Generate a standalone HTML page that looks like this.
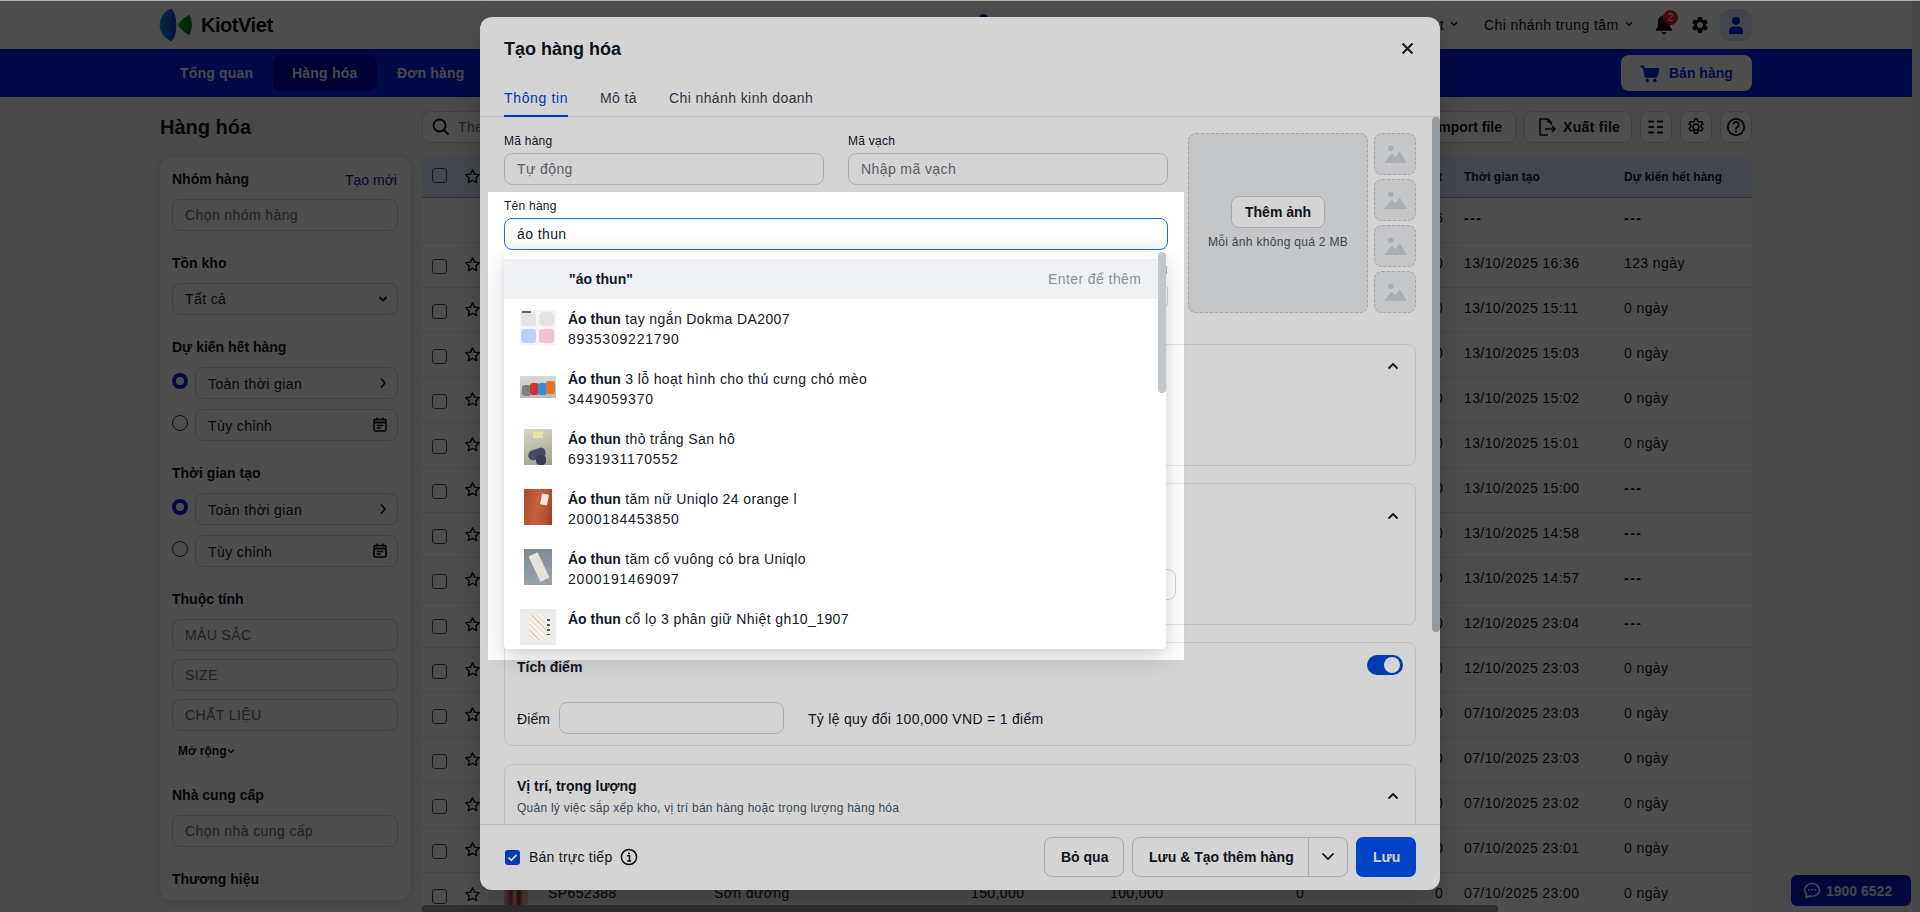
<!DOCTYPE html>
<html><head><meta charset="utf-8">
<style>
*{box-sizing:border-box;margin:0;padding:0}
html,body{width:1920px;height:912px;overflow:hidden}
body{font-family:"Liberation Sans",sans-serif;color:#111827;background:#f0f2f5;position:relative;font-size:14px}
.a{position:absolute;white-space:nowrap}
.r{letter-spacing:.4px}
.b{font-weight:700}
/* page */
#hdr{left:0;top:0;width:1920px;height:49px;background:#fff}
#nav{left:0;top:49px;width:1912px;height:48px;background:#0a22e6}
.navi{top:65px;line-height:16px;color:#e8ecff;font-size:14px;font-weight:700;letter-spacing:.2px}
.card{background:#fff;border-radius:12px;box-shadow:0 2px 14px rgba(0,0,0,.09)}
.inp{border:1px solid #d1d5db;border-radius:8px;background:#fff}
.ph{color:#6b7280}
.lbl{font-size:14px;font-weight:700;color:#111827}
.btn{border:1px solid #d1d5db;border-radius:8px;background:#fff}
.chk{width:16px;height:16px;border:1.5px solid #4b5563;border-radius:3px}
/* overlay */
#backdrop{left:0;top:0;width:1920px;height:912px;background:rgba(0,0,0,.63)}
#modal{left:480px;top:17px;width:960px;height:873px;background:#fff;border-radius:12px;overflow:hidden}
#spot{left:488px;top:192px;width:696px;height:468px;box-shadow:0 0 2px 4000px rgba(0,0,0,.17)}
#topline{left:0;top:0;width:1920px;height:1px;background:#acadac}

.th{top:169px;line-height:16px;font-size:12px;color:#111827}
.td{line-height:16px}
.hl{left:422px;width:1330px;height:1px;background:#e5e7eb}
.m{color:#111827}
.lb{font-size:12px;line-height:14px;letter-spacing:.25px;color:#111827}
.mi{border:1px solid #d1d5db;border-radius:8px;background:#fff}
.sec{border:1px solid #e5e7eb;border-radius:8px;background:#fff}
.dbox{border:1px dashed #c3c7ce;border-radius:8px;background:#eceef1}
.t14{font-size:14px;line-height:16px}
.dig{letter-spacing:.8px}
.obtn{border:1px solid #c9cdd4;border-radius:8px;background:#fff}

.dash{letter-spacing:1.5px;font-weight:700}

</style></head><body>
<svg width="0" height="0" style="position:absolute">
<symbol id="star" viewBox="0 0 24 24"><path d="M12 2.5l2.9 6.1 6.6.8-4.9 4.6 1.3 6.6L12 17.3l-5.9 3.3 1.3-6.6-4.9-4.6 6.6-.8z" fill="none" stroke="#111" stroke-width="2" stroke-linejoin="round"/></symbol>
<symbol id="imgic" viewBox="0 0 24 20"><circle cx="7.5" cy="5" r="2.6" fill="#cdd1d8"/><path d="M1 19 L8.5 10 L12 13.5 L16 8 L23 19 Z" fill="#cdd1d8"/></symbol>
<symbol id="chevup" viewBox="0 0 12 8"><path d="M1.5 6.5 L6 2 L10.5 6.5" stroke="#111" stroke-width="1.8" fill="none"/></symbol>
</svg>
<!-- PAGE -->
<div class="a" id="hdr"></div>
<div class="a" style="left:1912px;top:0;width:8px;height:912px;background:#e9e9ea"></div>
<div class="a" style="left:979px;top:14px;width:9px;height:9px;border-radius:50%;background:#0a2bd8"></div>
<svg class="a" style="left:159px;top:8px" width="36" height="34" viewBox="0 0 36 34" overflow="visible">
 <defs><linearGradient id="lg1" x1="0" x2="1" y1="0" y2="0"><stop offset="0" stop-color="#1c8fd0"/><stop offset="1" stop-color="#0a3fd4"/></linearGradient>
 <linearGradient id="lg2" x1="0" x2="1"><stop offset="0" stop-color="#19a329"/><stop offset="1" stop-color="#0a7a16"/></linearGradient></defs>
 <path d="M12.5 1.3 C 5 3, 1.2 10, 1.2 17 C 1.2 24, 5 30, 12.5 32.7 C 18.2 27, 18.2 7, 12.5 1.3 Z" fill="url(#lg1)" stroke="url(#lg1)" stroke-width="1" stroke-linejoin="round"/>
 <path d="M30 7.6 C 25.5 10, 22 13, 19.5 17 C 22 21, 25.5 24, 30 26.4 C 33 22, 33 12, 30 7.6 Z" fill="url(#lg2)" stroke="url(#lg2)" stroke-width="1.2" stroke-linejoin="round"/>
</svg>
<div class="a b" style="left:201px;top:14px;font-size:20px;color:#111;letter-spacing:-.45px">KiotViet</div>
<div class="a r" style="right:476px;top:17px;font-size:14px;color:#1f2937">Hỗ trợ t</div>
<svg class="a" style="left:1450px;top:21px" width="8" height="6" viewBox="0 0 8 6"><path d="M1 1.2 L4 4.2 L7 1.2" stroke="#1f2937" stroke-width="1.6" fill="none"/></svg>
<div class="a r" style="left:1484px;top:17px;font-size:14px;color:#111827">Chi nhánh trung tâm</div>
<svg class="a" style="left:1625px;top:21px" width="8" height="6" viewBox="0 0 8 6"><path d="M1 1.2 L4 4.2 L7 1.2" stroke="#1f2937" stroke-width="1.6" fill="none"/></svg>
<!-- bell -->
<svg class="a" style="left:1655px;top:14px" width="18" height="22" viewBox="0 0 18 22"><path d="M9 1.5c-3.6 0-6 2.8-6 6.3v4.6L1 15.5v1.2h16v-1.2l-2-3.1V7.8C15 4.3 12.6 1.5 9 1.5z M6.6 18h4.8a2.4 2.4 0 0 1-4.8 0z" fill="#111"/></svg>
<div class="a" style="left:1663px;top:10px;width:15px;height:15px;border-radius:8px;background:#dc2626;color:#fff;font-size:10px;text-align:center;line-height:15px">2</div>
<!-- gear -->
<svg class="a" style="left:1690px;top:15px" width="20" height="20" viewBox="0 0 24 24"><path fill="#111" d="M19.14 12.94c.04-.3.06-.61.06-.94 0-.32-.02-.64-.07-.94l2.03-1.58a.49.49 0 0 0 .12-.61l-1.92-3.32a.488.488 0 0 0-.59-.22l-2.39.96c-.5-.38-1.03-.7-1.62-.94l-.36-2.54a.484.484 0 0 0-.48-.41h-3.84c-.24 0-.43.17-.47.41l-.36 2.54c-.59.24-1.13.57-1.62.94l-2.39-.96c-.22-.08-.47 0-.59.22L2.74 8.87c-.12.21-.08.47.12.61l2.03 1.58c-.05.3-.09.63-.09.94s.02.64.07.94l-2.03 1.58a.49.49 0 0 0-.12.61l1.92 3.32c.12.22.37.29.59.22l2.39-.96c.5.38 1.03.7 1.62.94l.36 2.54c.05.24.24.41.48.41h3.84c.24 0 .44-.17.47-.41l.36-2.54c.59-.24 1.13-.56 1.62-.94l2.39.96c.22.08.47 0 .59-.22l1.92-3.32c.12-.22.07-.47-.12-.61l-2.01-1.58zM12 15.6c-1.98 0-3.6-1.62-3.6-3.6s1.62-3.6 3.6-3.6 3.6 1.62 3.6 3.6-1.62 3.6-3.6 3.6z"/></svg>
<div class="a" style="left:1720px;top:9px;width:32px;height:32px;border-radius:9px;background:#dbe5f8"></div>
<svg class="a" style="left:1727px;top:15px" width="18" height="20" viewBox="0 0 18 20"><circle cx="9" cy="5.8" r="4.1" fill="#0a2bd8"/><path d="M2 18.2v-2c0-2.6 2.2-4.6 4.8-4.6h4.4c2.6 0 4.8 2 4.8 4.6v2c0 .5-.4.9-.9.9H2.9c-.5 0-.9-.4-.9-.9z" fill="#0a2bd8"/></svg>

<div class="a" id="nav"></div>
<div class="a navi" style="left:180px">Tổng quan</div>
<div class="a" style="left:273px;top:55px;width:104px;height:36px;border-radius:8px;background:#0000a8"></div>
<div class="a navi" style="left:292px">Hàng hóa</div>
<div class="a navi" style="left:397px">Đơn hàng</div>
<div class="a" style="left:1621px;top:55px;width:131px;height:36px;border-radius:8px;background:#fff"></div>
<svg class="a" style="left:1640px;top:65px" width="20" height="18" viewBox="0 0 20 18"><path d="M0.5 1.5h2.8l2.6 10.2h10.3l2.2-7.5H5" stroke="#0a2bd8" stroke-width="2.2" fill="none" stroke-linejoin="round"/><path d="M5 4.5h13.2l-2 7H6.8z" fill="#0a2bd8"/><circle cx="7.3" cy="15.5" r="1.8" fill="#0a2bd8"/><circle cx="14.8" cy="15.5" r="1.8" fill="#0a2bd8"/></svg>
<div class="a b" style="left:1669px;top:65px;line-height:16px;font-size:14px;color:#0a2bd8">Bán hàng</div>


<!-- title -->
<div class="a b" style="left:160px;top:115px;font-size:20px;line-height:24px;color:#111827">Hàng hóa</div>
<!-- sidebar -->
<div class="a card" style="left:160px;top:157px;width:250px;height:743px"></div>
<div class="a lbl" style="left:172px;top:171px;line-height:16px">Nhóm hàng</div>
<div class="a" style="left:345px;top:172px;line-height:16px;color:#0024c0;font-size:14px">Tạo mới</div>
<div class="a inp" style="left:172px;top:199px;width:226px;height:32px"></div>
<div class="a r ph" style="left:185px;top:207px;line-height:16px">Chọn nhóm hàng</div>
<div class="a lbl" style="left:172px;top:255px;line-height:16px">Tồn kho</div>
<div class="a inp" style="left:172px;top:283px;width:226px;height:32px"></div>
<div class="a r" style="left:185px;top:291px;line-height:16px;color:#111827">Tất cả</div>
<svg class="a" style="left:378px;top:295px" width="10" height="8" viewBox="0 0 10 8"><path d="M1.5 2 L5 5.5 L8.5 2" stroke="#111" stroke-width="1.8" fill="none"/></svg>
<div class="a lbl" style="left:172px;top:339px;line-height:16px">Dự kiến hết hàng</div>
<div class="a" style="left:172px;top:373px;width:16px;height:16px;border-radius:50%;border:4px solid #0a2bd8;background:#fff"></div>
<div class="a inp" style="left:195px;top:367px;width:203px;height:32px"></div>
<div class="a r" style="left:208px;top:376px;line-height:16px">Toàn thời gian</div>
<svg class="a" style="left:379px;top:377px" width="8" height="12" viewBox="0 0 8 12"><path d="M2 1.5 L6 6 L2 10.5" stroke="#111" stroke-width="1.5" fill="none"/></svg>
<div class="a" style="left:172px;top:415px;width:16px;height:16px;border-radius:50%;border:1.2px solid #374151;background:#fff"></div>
<div class="a inp" style="left:195px;top:409px;width:203px;height:32px"></div>
<div class="a r" style="left:208px;top:418px;line-height:16px">Tùy chỉnh</div>
<svg class="a" style="left:373px;top:417px" width="14" height="15" viewBox="0 0 14 15"><rect x="1" y="2.5" width="12" height="11.5" rx="1.5" fill="none" stroke="#111" stroke-width="1.6"/><path d="M1 5.5h12" stroke="#111" stroke-width="2"/><path d="M4 0.5v3 M10 0.5v3" stroke="#111" stroke-width="1.6"/><path d="M3.8 8.5h6.4 M3.8 11h4" stroke="#111" stroke-width="1.3"/></svg>
<div class="a lbl" style="left:172px;top:465px;line-height:16px">Thời gian tạo</div>
<div class="a" style="left:172px;top:499px;width:16px;height:16px;border-radius:50%;border:4px solid #0a2bd8;background:#fff"></div>
<div class="a inp" style="left:195px;top:493px;width:203px;height:32px"></div>
<div class="a r" style="left:208px;top:502px;line-height:16px">Toàn thời gian</div>
<svg class="a" style="left:379px;top:503px" width="8" height="12" viewBox="0 0 8 12"><path d="M2 1.5 L6 6 L2 10.5" stroke="#111" stroke-width="1.5" fill="none"/></svg>
<div class="a" style="left:172px;top:541px;width:16px;height:16px;border-radius:50%;border:1.2px solid #374151;background:#fff"></div>
<div class="a inp" style="left:195px;top:535px;width:203px;height:32px"></div>
<div class="a r" style="left:208px;top:544px;line-height:16px">Tùy chỉnh</div>
<svg class="a" style="left:373px;top:543px" width="14" height="15" viewBox="0 0 14 15"><rect x="1" y="2.5" width="12" height="11.5" rx="1.5" fill="none" stroke="#111" stroke-width="1.6"/><path d="M1 5.5h12" stroke="#111" stroke-width="2"/><path d="M4 0.5v3 M10 0.5v3" stroke="#111" stroke-width="1.6"/><path d="M3.8 8.5h6.4 M3.8 11h4" stroke="#111" stroke-width="1.3"/></svg>
<div class="a lbl" style="left:172px;top:591px;line-height:16px">Thuộc tính</div>
<div class="a inp" style="left:172px;top:619px;width:226px;height:32px"></div>
<div class="a r ph" style="left:185px;top:627px;line-height:16px">MÀU SẮC</div>
<div class="a inp" style="left:172px;top:659px;width:226px;height:32px"></div>
<div class="a r ph" style="left:185px;top:667px;line-height:16px">SIZE</div>
<div class="a inp" style="left:172px;top:699px;width:226px;height:32px"></div>
<div class="a r ph" style="left:185px;top:707px;line-height:16px">CHẤT LIỆU</div>
<div class="a b" style="left:178px;top:744px;line-height:14px;font-size:12px;color:#111827">Mở rộng</div>
<svg class="a" style="left:227px;top:748px" width="8" height="6" viewBox="0 0 8 6"><path d="M1 1.5 L4 4.5 L7 1.5" stroke="#111" stroke-width="1.3" fill="none"/></svg>
<div class="a lbl" style="left:172px;top:787px;line-height:16px">Nhà cung cấp</div>
<div class="a inp" style="left:172px;top:815px;width:226px;height:32px"></div>
<div class="a r ph" style="left:185px;top:823px;line-height:16px">Chọn nhà cung cấp</div>
<div class="a lbl" style="left:172px;top:871px;line-height:16px">Thương hiệu</div>

<!-- toolbar -->
<div class="a inp" style="left:422px;top:111px;width:600px;height:32px"></div>
<svg class="a" style="left:432px;top:118px" width="18" height="18" viewBox="0 0 18 18"><circle cx="7.5" cy="7.5" r="6" stroke="#111" stroke-width="1.8" fill="none"/><path d="M12 12 L16.5 16.5" stroke="#111" stroke-width="1.8"/></svg>
<div class="a r ph" style="left:458px;top:119px;line-height:16px">Theo mã, tên hàng</div>
<div class="a btn" style="left:1380px;top:111px;width:136px;height:32px"></div>
<div class="a b" style="right:418px;top:119px;line-height:16px;color:#111827">Import file</div>
<div class="a btn" style="left:1524px;top:111px;width:108px;height:32px"></div>
<svg class="a" style="left:1537px;top:118px" width="20" height="18" viewBox="0 0 20 18"><path d="M11 1 H3 V17 H11 M11 1 L14 4 V7 M11 1 V4 H14" stroke="#111" stroke-width="1.6" fill="none" stroke-linejoin="round"/><path d="M8 11 H18 M15 8 L18 11 L15 14" stroke="#111" stroke-width="1.6" fill="none"/></svg>
<div class="a b" style="left:1563px;top:119px;line-height:16px;color:#111827;letter-spacing:.3px">Xuất file</div>
<div class="a btn" style="left:1640px;top:111px;width:32px;height:32px"></div>
<svg class="a" style="left:1647px;top:120px" width="18" height="14" viewBox="0 0 18 14"><path d="M1.5 1.5h5.5M1.5 7h5.5M1.5 12.5h5.5M10 1.5h6M10 7h6M10 12.5h6" stroke="#111" stroke-width="1.9"/></svg>
<div class="a btn" style="left:1680px;top:111px;width:32px;height:32px"></div>
<svg class="a" style="left:1686px;top:117px" width="20" height="20" viewBox="0 0 24 24"><path fill="none" stroke="#111" stroke-width="1.8" d="M12 8.5a3.5 3.5 0 1 0 0 7 3.5 3.5 0 0 0 0-7z M10.3 2.5h3.4l.5 2.6 1.9 1.1 2.5-.9 1.7 2.9-2 1.7v2.2l2 1.7-1.7 2.9-2.5-.9-1.9 1.1-.5 2.6h-3.4l-.5-2.6-1.9-1.1-2.5.9-1.7-2.9 2-1.7v-2.2l-2-1.7 1.7-2.9 2.5.9 1.9-1.1z" stroke-linejoin="round"/></svg>
<div class="a btn" style="left:1720px;top:111px;width:32px;height:32px"></div>
<svg class="a" style="left:1726px;top:117px" width="20" height="20" viewBox="0 0 20 20"><circle cx="10" cy="10" r="8.2" stroke="#111" stroke-width="1.8" fill="none"/><path d="M7.3 7.6a2.7 2.7 0 1 1 3.8 2.5c-.8.4-1.1.9-1.1 1.7v.6" stroke="#111" stroke-width="1.8" fill="none"/><circle cx="10" cy="14.6" r="1.1" fill="#111"/></svg>


<!-- table -->
<div class="a" style="left:422px;top:157px;width:1330px;height:760px;background:#fff;border-radius:8px 8px 0 0"></div>
<div class="a" style="left:422px;top:157px;width:1330px;height:41px;background:#dde8fc;border-radius:8px 8px 0 0;border-bottom:1px solid #8eaee6"></div>
<div class="a chk" style="left:432px;top:168px;width:15px;height:15px"></div><svg class="a" style="left:464px;top:168px" width="17" height="17"><use href="#star"/></svg><div class="a b th" style="left:1438px">t</div><div class="a b th" style="left:1464px">Thời gian tạo</div><div class="a b th" style="left:1624px">Dự kiến hết hàng</div>
<div class="a hl" style="top:242px"></div><div class="a r td" style="left:1435px;top:210px">6</div><div class="a r td dash" style="left:1464px;top:210px">---</div><div class="a r td dash" style="left:1624px;top:210px">---</div>
<div class="a hl" style="top:287px"></div><div class="a chk" style="left:432px;top:259px;width:15px;height:15px"></div><svg class="a" style="left:464px;top:256px" width="17" height="17"><use href="#star"/></svg><div class="a r td" style="left:1435px;top:255px">0</div><div class="a r td" style="left:1464px;top:255px">13/10/2025 16:36</div><div class="a r td" style="left:1624px;top:255px">123 ngày</div>
<div class="a hl" style="top:332px"></div><div class="a chk" style="left:432px;top:304px;width:15px;height:15px"></div><svg class="a" style="left:464px;top:301px" width="17" height="17"><use href="#star"/></svg><div class="a r td" style="left:1435px;top:300px">0</div><div class="a r td" style="left:1464px;top:300px">13/10/2025 15:11</div><div class="a r td" style="left:1624px;top:300px">0 ngày</div>
<div class="a hl" style="top:377px"></div><div class="a chk" style="left:432px;top:349px;width:15px;height:15px"></div><svg class="a" style="left:464px;top:346px" width="17" height="17"><use href="#star"/></svg><div class="a r td" style="left:1435px;top:345px">0</div><div class="a r td" style="left:1464px;top:345px">13/10/2025 15:03</div><div class="a r td" style="left:1624px;top:345px">0 ngày</div>
<div class="a hl" style="top:422px"></div><div class="a chk" style="left:432px;top:394px;width:15px;height:15px"></div><svg class="a" style="left:464px;top:391px" width="17" height="17"><use href="#star"/></svg><div class="a r td" style="left:1435px;top:390px">0</div><div class="a r td" style="left:1464px;top:390px">13/10/2025 15:02</div><div class="a r td" style="left:1624px;top:390px">0 ngày</div>
<div class="a hl" style="top:467px"></div><div class="a chk" style="left:432px;top:439px;width:15px;height:15px"></div><svg class="a" style="left:464px;top:436px" width="17" height="17"><use href="#star"/></svg><div class="a r td" style="left:1435px;top:435px">0</div><div class="a r td" style="left:1464px;top:435px">13/10/2025 15:01</div><div class="a r td" style="left:1624px;top:435px">0 ngày</div>
<div class="a hl" style="top:512px"></div><div class="a chk" style="left:432px;top:484px;width:15px;height:15px"></div><svg class="a" style="left:464px;top:481px" width="17" height="17"><use href="#star"/></svg><div class="a r td" style="left:1435px;top:480px">0</div><div class="a r td" style="left:1464px;top:480px">13/10/2025 15:00</div><div class="a r td dash" style="left:1624px;top:480px">---</div>
<div class="a hl" style="top:557px"></div><div class="a chk" style="left:432px;top:529px;width:15px;height:15px"></div><svg class="a" style="left:464px;top:526px" width="17" height="17"><use href="#star"/></svg><div class="a r td" style="left:1435px;top:525px">0</div><div class="a r td" style="left:1464px;top:525px">13/10/2025 14:58</div><div class="a r td dash" style="left:1624px;top:525px">---</div>
<div class="a hl" style="top:602px"></div><div class="a chk" style="left:432px;top:574px;width:15px;height:15px"></div><svg class="a" style="left:464px;top:571px" width="17" height="17"><use href="#star"/></svg><div class="a r td" style="left:1435px;top:570px">0</div><div class="a r td" style="left:1464px;top:570px">13/10/2025 14:57</div><div class="a r td dash" style="left:1624px;top:570px">---</div>
<div class="a hl" style="top:647px"></div><div class="a chk" style="left:432px;top:619px;width:15px;height:15px"></div><svg class="a" style="left:464px;top:616px" width="17" height="17"><use href="#star"/></svg><div class="a r td" style="left:1435px;top:615px">0</div><div class="a r td" style="left:1464px;top:615px">12/10/2025 23:04</div><div class="a r td dash" style="left:1624px;top:615px">---</div>
<div class="a hl" style="top:692px"></div><div class="a chk" style="left:432px;top:664px;width:15px;height:15px"></div><svg class="a" style="left:464px;top:661px" width="17" height="17"><use href="#star"/></svg><div class="a r td" style="left:1435px;top:660px">0</div><div class="a r td" style="left:1464px;top:660px">12/10/2025 23:03</div><div class="a r td" style="left:1624px;top:660px">0 ngày</div>
<div class="a hl" style="top:737px"></div><div class="a chk" style="left:432px;top:709px;width:15px;height:15px"></div><svg class="a" style="left:464px;top:706px" width="17" height="17"><use href="#star"/></svg><div class="a r td" style="left:1435px;top:705px">0</div><div class="a r td" style="left:1464px;top:705px">07/10/2025 23:03</div><div class="a r td" style="left:1624px;top:705px">0 ngày</div>
<div class="a hl" style="top:782px"></div><div class="a chk" style="left:432px;top:754px;width:15px;height:15px"></div><svg class="a" style="left:464px;top:751px" width="17" height="17"><use href="#star"/></svg><div class="a r td" style="left:1435px;top:750px">0</div><div class="a r td" style="left:1464px;top:750px">07/10/2025 23:03</div><div class="a r td" style="left:1624px;top:750px">0 ngày</div>
<div class="a hl" style="top:827px"></div><div class="a chk" style="left:432px;top:799px;width:15px;height:15px"></div><svg class="a" style="left:464px;top:796px" width="17" height="17"><use href="#star"/></svg><div class="a r td" style="left:1435px;top:795px">0</div><div class="a r td" style="left:1464px;top:795px">07/10/2025 23:02</div><div class="a r td" style="left:1624px;top:795px">0 ngày</div>
<div class="a hl" style="top:872px"></div><div class="a chk" style="left:432px;top:844px;width:15px;height:15px"></div><svg class="a" style="left:464px;top:841px" width="17" height="17"><use href="#star"/></svg><div class="a r td" style="left:1435px;top:840px">0</div><div class="a r td" style="left:1464px;top:840px">07/10/2025 23:01</div><div class="a r td" style="left:1624px;top:840px">0 ngày</div>
<div class="a hl" style="top:917px"></div><div class="a chk" style="left:432px;top:889px;width:15px;height:15px"></div><svg class="a" style="left:464px;top:886px" width="17" height="17"><use href="#star"/></svg><div class="a r td" style="left:1435px;top:885px">0</div><div class="a r td" style="left:1464px;top:885px">07/10/2025 23:00</div><div class="a r td" style="left:1624px;top:885px">0 ngày</div>

<div class="a" style="left:504px;top:881px;width:24px;height:24px;background:linear-gradient(90deg,#e8d0cc,#c0483a 30%,#e8c8c0 45%,#b03020 60%,#e0c0b8 80%)"></div>
<div class="a r td" style="left:548px;top:885px">SP652388</div>
<div class="a r td" style="left:714px;top:885px">Sơn dưỡng</div>
<div class="a r td" style="left:971px;top:885px">150,000</div>
<div class="a r td" style="left:1110px;top:885px">100,000</div>
<div class="a r td" style="left:1296px;top:885px">0</div>
<div class="a" style="left:422px;top:905px;width:1076px;height:8px;border-radius:4px;background:#9a9ca3"></div>
<!-- chat -->
<div class="a" style="left:1791px;top:875px;width:120px;height:31px;border-radius:6px;background:#061ac4"></div>
<svg class="a" style="left:1803px;top:882px" width="18" height="17" viewBox="0 0 18 17"><path d="M9 1.5c-4.1 0-7.5 2.8-7.5 6.3 0 1.7.8 3.2 2.1 4.4L3 15.5l3.6-1.6c.8.2 1.6.3 2.4.3 4.1 0 7.5-2.8 7.5-6.4S13.1 1.5 9 1.5z" fill="none" stroke="#dde3ff" stroke-width="1.6" stroke-linejoin="round"/><circle cx="5.8" cy="8" r="1" fill="#dde3ff"/><circle cx="9" cy="8" r="1" fill="#dde3ff"/><circle cx="12.2" cy="8" r="1" fill="#dde3ff"/></svg>
<div class="a b" style="left:1826px;top:883px;line-height:16px;color:#dde3ff;font-size:14px">1900 6522</div>

<!-- BACKDROP -->
<div class="a" id="backdrop"></div>
<div class="a" id="modal" style="box-shadow:0 12px 28px rgba(0,0,0,.2)"></div>
<!-- header -->
<div class="a b m" style="left:504px;top:38px;font-size:18px;line-height:22px">Tạo hàng hóa</div>
<svg class="a" style="left:1401px;top:42px" width="13" height="13" viewBox="0 0 13 13"><path d="M1.5 1.5 L11.5 11.5 M11.5 1.5 L1.5 11.5" stroke="#1f2937" stroke-width="2.2"/></svg>
<div class="a t14" style="left:504px;top:90px;color:#0040e0;letter-spacing:.65px">Thông tin</div>
<div class="a t14 r" style="left:600px;top:90px;color:#374151">Mô tả</div>
<div class="a t14 r" style="left:669px;top:90px;color:#374151">Chi nhánh kinh doanh</div>
<div class="a" style="left:480px;top:116px;width:960px;height:1px;background:#e2e4e8"></div>
<div class="a" style="left:504px;top:115px;width:64px;height:2px;background:#0040e0"></div>
<!-- body clip -->
<div class="a" style="left:480px;top:117px;width:960px;height:707px;overflow:hidden">
<div class="a" style="left:-480px;top:-117px;width:1920px;height:912px">
 <div class="a lb" style="left:504px;top:134px">Mã hàng</div>
 <div class="a mi" style="left:504px;top:153px;width:320px;height:32px"></div>
 <div class="a t14 r ph" style="left:517px;top:161px">Tự động</div>
 <div class="a lb" style="left:848px;top:134px">Mã vạch</div>
 <div class="a mi" style="left:848px;top:153px;width:320px;height:32px"></div>
 <div class="a t14 r ph" style="left:861px;top:161px">Nhập mã vạch</div>

 <div class="a lb" style="left:504px;top:199px">Tên hàng</div>
 <div class="a" style="left:504px;top:218px;width:664px;height:32px;border:1.5px solid #1a6ef0;border-radius:8px;background:linear-gradient(#fff 50%,#f6f6f6)"></div>
 <div class="a t14 r" style="left:517px;top:226px;color:#111827">áo thun</div>

 <!-- hidden row under dropdown -->
 <div class="a mi" style="left:848px;top:287px;width:320px;height:23px;border-top:none;border-radius:0 0 8px 8px"></div>
 <div class="a" style="left:1166px;top:266px;width:1px;height:8px;background:#7cc8ee"></div>

 <!-- image uploader -->
 <div class="a dbox" style="left:1188px;top:133px;width:180px;height:180px"></div>
 <div class="a obtn" style="left:1231px;top:196px;width:94px;height:32px"></div>
 <div class="a b t14" style="left:1245px;top:204px;color:#111827">Thêm ảnh</div>
 <div class="a r" style="left:1208px;top:235px;font-size:12px;line-height:14px;color:#4b5563;letter-spacing:.3px">Mỗi ảnh không quá 2 MB</div>
 <div class="a dbox" style="left:1374px;top:133px;width:42px;height:42px"></div>
 <div class="a dbox" style="left:1374px;top:179px;width:42px;height:42px"></div>
 <div class="a dbox" style="left:1374px;top:225px;width:42px;height:42px"></div>
 <div class="a dbox" style="left:1374px;top:271px;width:42px;height:42px"></div>
 <svg class="a" style="left:1383px;top:143px" width="25" height="21"><use href="#imgic"/></svg>
 <svg class="a" style="left:1383px;top:189px" width="25" height="21"><use href="#imgic"/></svg>
 <svg class="a" style="left:1383px;top:235px" width="25" height="21"><use href="#imgic"/></svg>
 <svg class="a" style="left:1383px;top:281px" width="25" height="21"><use href="#imgic"/></svg>

 <!-- sections -->
 <div class="a sec" style="left:504px;top:344px;width:912px;height:122px"></div>
 <svg class="a" style="left:1387px;top:362px" width="12" height="8"><use href="#chevup"/></svg>
 <div class="a sec" style="left:504px;top:483px;width:912px;height:142px"></div>
 <svg class="a" style="left:1387px;top:512px" width="12" height="8"><use href="#chevup"/></svg>
 <div class="a mi" style="left:900px;top:569px;width:276px;height:31px"></div>

 <div class="a sec" style="left:504px;top:642px;width:912px;height:104px"></div>
 <div class="a b t14 m" style="left:517px;top:659px">Tích điểm</div>
 <div class="a" style="left:1367px;top:655px;width:36px;height:20px;border-radius:10px;background:#0047d8"></div>
 <div class="a" style="left:1384px;top:657px;width:16px;height:16px;border-radius:8px;background:#fff"></div>
 <div class="a t14 m" style="left:517px;top:711px;letter-spacing:.1px">Điểm</div>
 <div class="a mi" style="left:559px;top:702px;width:225px;height:32px"></div>
 <div class="a t14 r m" style="left:808px;top:711px;letter-spacing:.3px">Tỷ lệ quy đổi 100,000 VND = 1 điểm</div>

 <div class="a sec" style="left:504px;top:764px;width:912px;height:140px"></div>
 <div class="a b t14 m" style="left:517px;top:778px">Vị trí, trọng lượng</div>
 <div class="a r" style="left:517px;top:801px;font-size:12px;line-height:14px;color:#4b5563;letter-spacing:.25px">Quản lý việc sắp xếp kho, vị trí bán hàng hoặc trọng lượng hàng hóa</div>
 <svg class="a" style="left:1387px;top:792px" width="12" height="8"><use href="#chevup"/></svg>
</div></div>
<!-- modal scrollbar -->
<div class="a" style="left:1432px;top:117px;width:8px;height:515px;border-radius:4px;background:#b4b9c2"></div>

<!-- footer -->
<div class="a" style="left:480px;top:824px;width:960px;height:1px;background:#e2e4e8"></div>
<div class="a" style="left:505px;top:850px;width:15px;height:15px;border-radius:3px;background:#0047d8"></div>
<svg class="a" style="left:505px;top:850px" width="15" height="15" viewBox="0 0 15 15"><path d="M3.5 7.6 L6.3 10.3 L11.5 4.8" stroke="#fff" stroke-width="1.8" fill="none"/></svg>
<div class="a t14 m" style="left:529px;top:849px;letter-spacing:.25px">Bán trực tiếp</div>
<svg class="a" style="left:620px;top:848px" width="18" height="18" viewBox="0 0 18 18"><circle cx="9" cy="9" r="7.6" stroke="#111" stroke-width="1.5" fill="none"/><circle cx="9" cy="5.3" r="1.1" fill="#111"/><path d="M7.2 7.8h2.3v5 M7.2 12.9h4" stroke="#111" stroke-width="1.5" fill="none"/></svg>
<div class="a obtn" style="left:1044px;top:837px;width:80px;height:40px"></div>
<div class="a b t14 m" style="left:1061px;top:849px">Bỏ qua</div>
<div class="a obtn" style="left:1132px;top:837px;width:216px;height:40px"></div>
<div class="a" style="left:1308px;top:838px;width:1px;height:38px;background:#c9cdd4"></div>
<div class="a b t14 m" style="left:1149px;top:849px">Lưu &amp; Tạo thêm hàng</div>
<svg class="a" style="left:1321px;top:852px" width="14" height="9" viewBox="0 0 14 9"><path d="M1.5 1.5 L7 7 L12.5 1.5" stroke="#111" stroke-width="1.7" fill="none"/></svg>
<div class="a" style="left:1356px;top:837px;width:60px;height:40px;border-radius:7px;background:#0050ee"></div>
<div class="a b t14" style="left:1373px;top:849px;color:#fff">Lưu</div>

<!-- dropdown -->
<div class="a" style="left:504px;top:252px;width:662px;height:397px;background:#fff;border-radius:4px;box-shadow:0 10px 24px rgba(0,0,0,.16),0 2px 6px rgba(0,0,0,.05);overflow:hidden">
 <div class="a" style="left:0;top:7px;width:654px;height:40px;background:#eff0f3"></div>
 <div class="a b t14 m" style="left:65px;top:19px">"áo thun"</div>
 <div class="a t14 r" style="left:544px;top:19px;color:#8b929c;letter-spacing:.42px">Enter để thêm</div>
 <div class="a" style="left:654px;top:0;width:8px;height:141px;border-radius:4px;background:#c2c6cd"></div>
</div>
<div class="a" style="left:504px;top:252px;width:654px;height:397px;overflow:hidden;border-radius:0 0 4px 4px"><div class="a" style="left:-504px;top:-252px;width:1920px;height:912px">
<div class="a" style="left:520px;width:36px;height:35px;top:310px;background:#f4f4f2;overflow:hidden"><div class="a" style="left:1px;top:2px;width:15px;height:14px;border-radius:3px;background:#e2e3e6"></div><div class="a" style="left:19px;top:2px;width:15px;height:14px;border-radius:5px;background:#e4e4dc"></div><div class="a" style="left:1px;top:19px;width:15px;height:14px;border-radius:3px;background:#bdd0f2"></div><div class="a" style="left:19px;top:19px;width:15px;height:14px;border-radius:3px;background:#f0c4d2"></div><div class="a" style="left:2px;top:1px;width:9px;height:2px;background:#666"></div></div>
<div class="a t14 m r" style="left:568px;top:311px"><b style="letter-spacing:0">Áo thun</b> tay ngắn Dokma DA2007</div>
<div class="a t14 m dig" style="left:568px;top:331px">8935309221790</div>
<div class="a" style="left:520px;width:36px;height:22px;top:376px;background:linear-gradient(#d8d8d6,#b9bab8);overflow:hidden"><div class="a" style="left:2px;top:9px;width:9px;height:11px;border-radius:3px;background:#7a807a"></div><div class="a" style="left:10px;top:7px;width:9px;height:12px;border-radius:3px;background:#d2303a"></div><div class="a" style="left:18px;top:7px;width:9px;height:12px;border-radius:3px;background:#2f8fd8"></div><div class="a" style="left:26px;top:5px;width:9px;height:13px;border-radius:3px;background:#e8702a"></div></div>
<div class="a t14 m r" style="left:568px;top:371px"><b style="letter-spacing:0">Áo thun</b> 3 lỗ hoạt hình cho thú cưng chó mèo</div>
<div class="a t14 m dig" style="left:568px;top:391px">3449059370</div>
<div class="a" style="left:524px;width:28px;height:36px;top:429px;background:linear-gradient(160deg,#d9d8c6,#b7b6a6 60%,#9c9b90);overflow:hidden"><div class="a" style="left:9px;top:3px;width:10px;height:6px;background:#e8e4a0"></div><div class="a" style="left:4px;top:20px;width:18px;height:10px;border-radius:5px;background:#4a4a66;transform:rotate(-20deg)"></div><div class="a" style="left:12px;top:26px;width:10px;height:10px;border-radius:4px;background:#3a3b58"></div></div>
<div class="a t14 m r" style="left:568px;top:431px"><b style="letter-spacing:0">Áo thun</b> thỏ trắng San hô</div>
<div class="a t14 m dig" style="left:568px;top:451px">6931931170552</div>
<div class="a" style="left:524px;width:28px;height:36px;top:489px;background:linear-gradient(100deg,#a84a2c,#c6603e 45%,#b85636 70%,#93402a);overflow:hidden"><div class="a" style="left:17px;top:5px;width:7px;height:11px;background:#ece8e0;transform:rotate(10deg)"></div></div>
<div class="a t14 m r" style="left:568px;top:491px"><b style="letter-spacing:0">Áo thun</b> tăm nữ Uniqlo 24 orange l</div>
<div class="a t14 m dig" style="left:568px;top:511px">2000184453850</div>
<div class="a" style="left:524px;width:28px;height:36px;top:549px;background:linear-gradient(#7d8b95,#98a3aa);overflow:hidden"><div class="a" style="left:10px;top:4px;width:10px;height:28px;transform:rotate(-25deg);background:#e8e2d6"></div></div>
<div class="a t14 m r" style="left:568px;top:551px"><b style="letter-spacing:0">Áo thun</b> tăm cổ vuông có bra Uniqlo</div>
<div class="a t14 m dig" style="left:568px;top:571px">2000191469097</div>
<div class="a" style="left:520px;width:36px;height:36px;top:609px;background:#ececeb;overflow:hidden"><div class="a" style="left:9px;top:6px;width:18px;height:25px;border-radius:4px;background:repeating-linear-gradient(45deg,#f6f2ea 0 3px,#d8cfc0 3px 4px)"></div><div class="a" style="left:27px;top:10px;width:3px;height:16px;background:repeating-linear-gradient(#555 0 2px,transparent 2px 5px)"></div></div>
<div class="a t14 m r" style="left:568px;top:611px"><b style="letter-spacing:0">Áo thun</b> cổ lọ 3 phân giữ Nhiệt gh10_1907</div>
</div></div>

<div class="a" id="spot"></div>
<div class="a" id="topline"></div>
</body></html>
